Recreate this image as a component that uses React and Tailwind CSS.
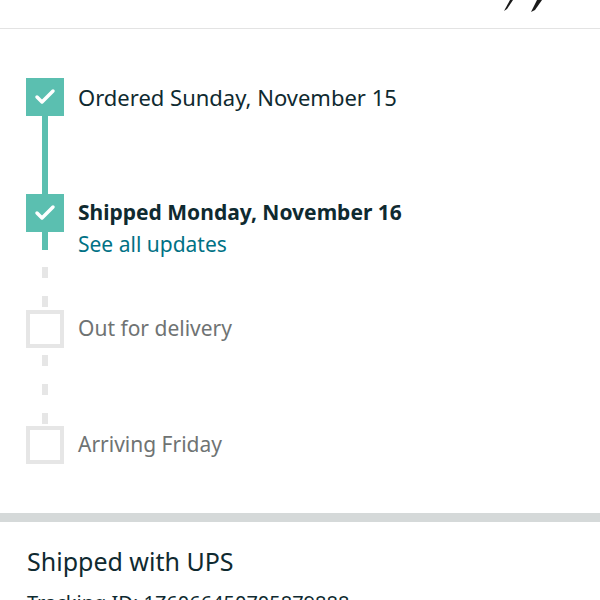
import { Check } from "lucide-react";

function Box({ done }) {
  if (done) {
    return (
      <div className="w-[38px] h-[38px] bg-[#5bbfb0] flex items-center justify-center shrink-0">
        <Check className="w-[24px] h-[24px] text-white" strokeWidth={3.5} />
      </div>
    );
  }
  return <div className="w-[38px] h-[38px] border-[4px] border-[#e6e6e6] bg-white shrink-0" />;
}

function Dashes({ top, count }) {
  return (
    <div className="flex flex-col items-center" style={{ paddingTop: top }}>
      {Array.from({ length: count }).map((_, i) => (
        <div key={i} className="w-[6px] h-[11px] bg-[#e6e6e6] mb-[18px]" />
      ))}
    </div>
  );
}

export default function App() {
  return (
    <div className="w-[600px] h-[600px] overflow-hidden bg-white font-['Noto_Sans',sans-serif]">
      {/* header strip */}
      <div className="h-[29px] border-b border-[#e3e3e3] flex justify-end pr-[50px]">
        <svg width="50" height="14" viewBox="0 0 50 14">
          <path d="M10 0 L13 0 L7 9 L4 11 Z" fill="#1a1a1a" />
          <path d="M37 0 L42 0 L35 10 L31 12 Z" fill="#1a1a1a" />
        </svg>
      </div>

      {/* timeline */}
      <div className="pl-[26px] pt-[49px] h-[484px]">
        {/* step 1 */}
        <div className="flex gap-[14px]">
          <div className="flex flex-col items-center">
            <Box done />
            <div className="w-[6px] h-[78px] bg-[#5bbfb0]" />
          </div>
          <div className="h-[38px] flex items-center text-[22px] text-[#0f2a30]">
            Ordered Sunday, November 15
          </div>
        </div>

        {/* step 2 */}
        <div className="flex gap-[14px]">
          <div className="flex flex-col items-center">
            <Box done />
            <div className="w-[6px] h-[18px] bg-[#5bbfb0]" />
            <Dashes top={17} count={2} />
          </div>
          <div className="flex flex-col">
            <div className="h-[38px] flex items-center text-[21px] font-bold text-[#0f2a30]">
              Shipped Monday, November 16
            </div>
            <div className="text-[21px] leading-[26px] text-[#007185] -mt-[1px]">See all updates</div>
          </div>
        </div>

        {/* step 3 */}
        <div className="flex gap-[14px] -mt-[15px]">
          <div className="flex flex-col items-center">
            <Box />
            <Dashes top={7} count={3} />
          </div>
          <div className="h-[38px] flex items-center text-[21px] text-[#6f7373]">Out for delivery</div>
        </div>

        {/* step 4 */}
        <div className="flex gap-[14px] -mt-[16px]">
          <Box />
          <div className="h-[38px] flex items-center text-[21px] text-[#6f7373]">Arriving Friday</div>
        </div>
      </div>

      <div className="h-[9px] bg-[#d5d9d9]" />

      <div className="px-[27px] pt-[22px]">
        <div className="text-[25px] leading-[34px] text-[#0f2a30]">Shipped with UPS</div>
        <div className="mt-[10px] text-[20px] text-[#0f2a30]">Tracking ID: 1Z6066450705879888</div>
      </div>
    </div>
  );
}
